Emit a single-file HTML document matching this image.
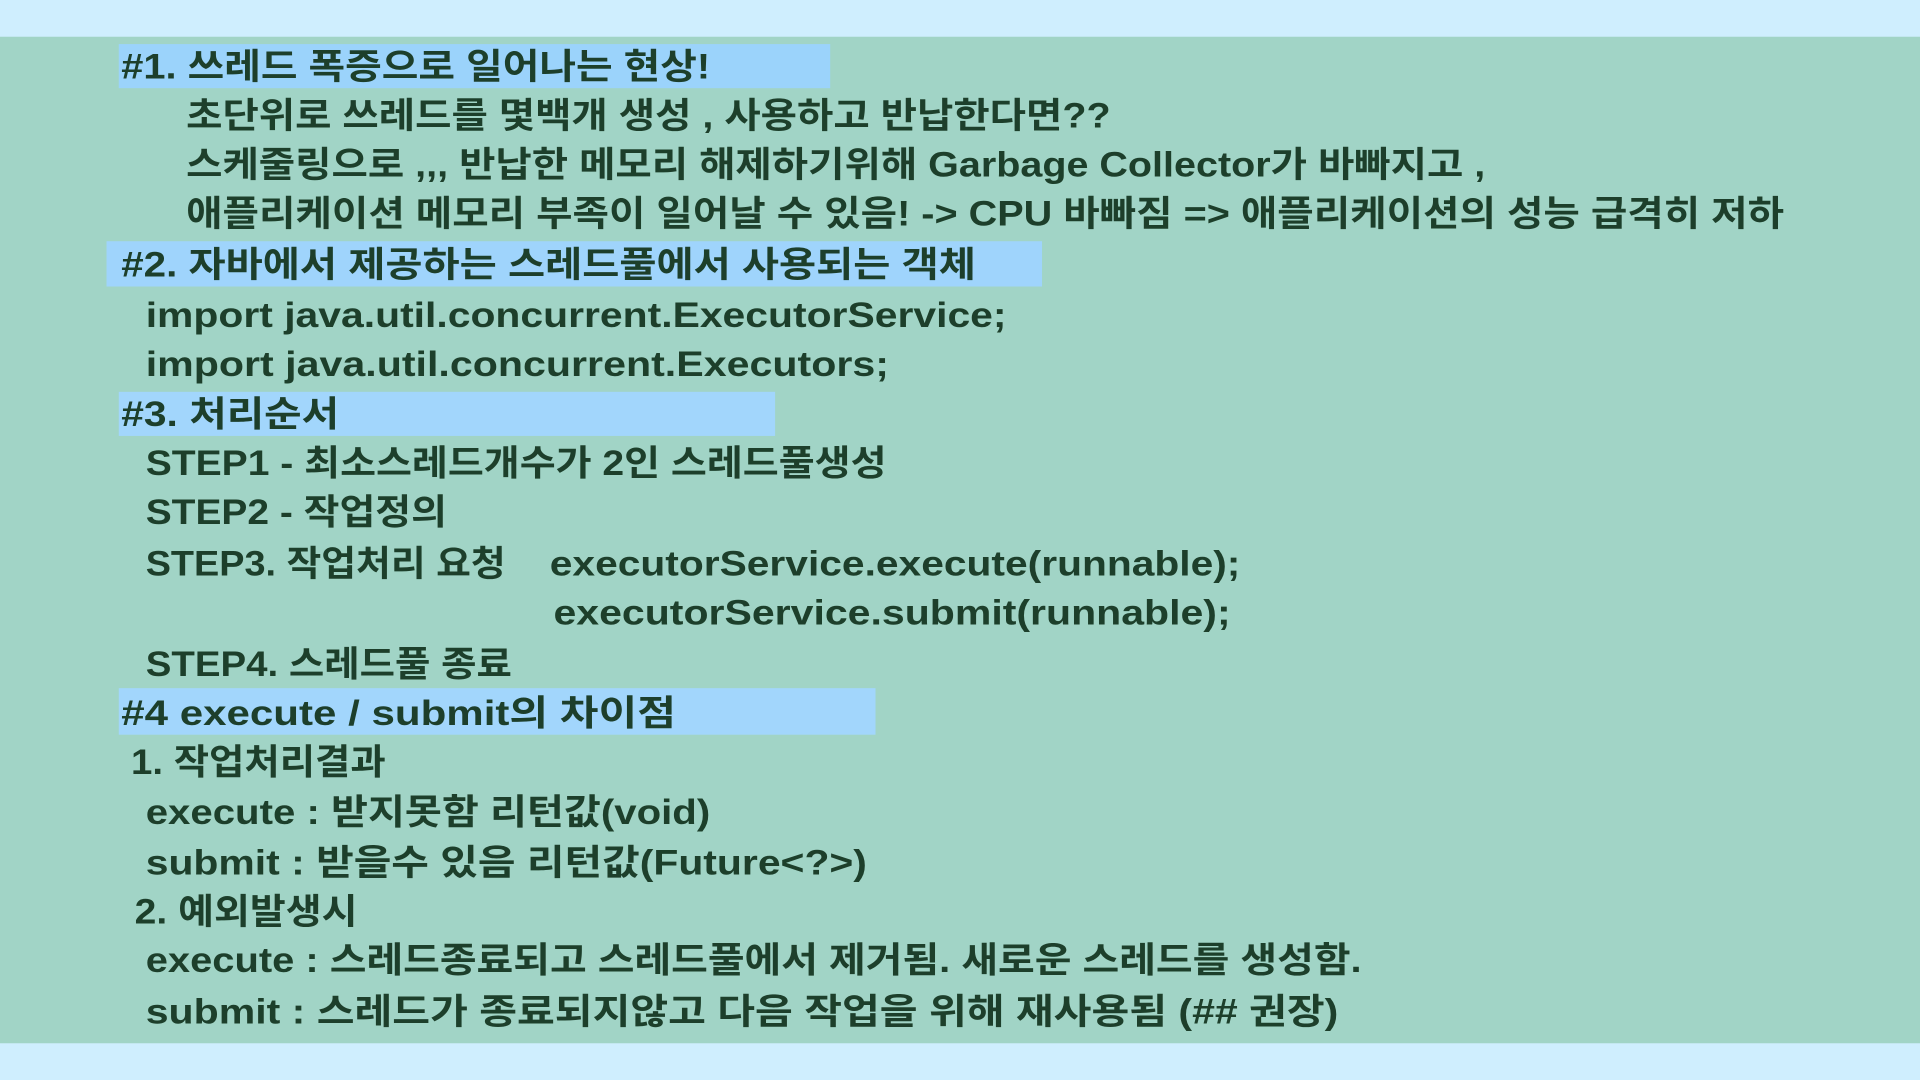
<!DOCTYPE html>
<html><head><meta charset="utf-8">
<style>
html,body{margin:0;padding:0;width:1920px;height:1080px;overflow:hidden;background:#cfeefe;}
svg{display:block}
text{font-family:"Liberation Sans","Noto Sans CJK KR","NanumGothic",sans-serif;font-size:29px;font-weight:700;fill:#1d3f2b;}
</style></head><body>
<svg width="1920" height="1080" viewBox="0 0 1568 882" preserveAspectRatio="none" xmlns="http://www.w3.org/2000/svg">
<rect x="0" y="0" width="1568" height="882" fill="#cfeefe"/>
<rect x="0" y="30" width="1568" height="822" fill="#a1d4c6"/>
<rect x="97" y="36" width="581" height="36" fill="#9bd3fb"/>
<rect x="87" y="197" width="764" height="37" fill="#9fd4fc"/>
<rect x="97" y="320" width="536" height="36" fill="#a2d6fc"/>
<rect x="97" y="562" width="618" height="38" fill="#a2d6fc"/>
<g>
<text x="99" y="64" textLength="481" lengthAdjust="spacingAndGlyphs">#1. 쓰레드 폭증으로 일어나는 현상!</text>
<text x="152" y="104" textLength="755" lengthAdjust="spacingAndGlyphs">초단위로 쓰레드를 몇백개 생성 , 사용하고 반납한다면??</text>
<text x="152" y="144" textLength="1061" lengthAdjust="spacingAndGlyphs">스케줄링으로 ,,, 반납한 메모리 해제하기위해 Garbage Collector가 바빠지고 ,</text>
<text x="152" y="184" textLength="1305" lengthAdjust="spacingAndGlyphs">애플리케이션 메모리 부족이 일어날 수 있음! -&gt; CPU 바빠짐  =&gt; 애플리케이션의 성능 급격히 저하</text>
<text x="99" y="226" textLength="698" lengthAdjust="spacingAndGlyphs">#2. 자바에서 제공하는 스레드풀에서 사용되는 객체</text>
<text x="119" y="267" textLength="703" lengthAdjust="spacingAndGlyphs">import java.util.concurrent.ExecutorService;</text>
<text x="119" y="307" textLength="607" lengthAdjust="spacingAndGlyphs">import java.util.concurrent.Executors;</text>
<text x="99" y="348" textLength="178" lengthAdjust="spacingAndGlyphs">#3. 처리순서</text>
<text x="119" y="388" textLength="605" lengthAdjust="spacingAndGlyphs">STEP1 - 최소스레드개수가 2인 스레드풀생성</text>
<text x="119" y="428" textLength="246" lengthAdjust="spacingAndGlyphs">STEP2 - 작업정의</text>
<text x="119" y="470" textLength="294" lengthAdjust="spacingAndGlyphs">STEP3. 작업처리 요청</text>
<text x="449" y="470" textLength="564" lengthAdjust="spacingAndGlyphs">executorService.execute(runnable);</text>
<text x="452" y="510" textLength="553" lengthAdjust="spacingAndGlyphs">executorService.submit(runnable);</text>
<text x="119" y="552" textLength="299" lengthAdjust="spacingAndGlyphs">STEP4. 스레드풀 종료</text>
<text x="99" y="592" textLength="453" lengthAdjust="spacingAndGlyphs">#4 execute / submit의 차이점</text>
<text x="107" y="632" textLength="208" lengthAdjust="spacingAndGlyphs">1. 작업처리결과</text>
<text x="119" y="673" textLength="461" lengthAdjust="spacingAndGlyphs">execute : 받지못함 리턴값(void)</text>
<text x="119" y="714" textLength="589" lengthAdjust="spacingAndGlyphs">submit : 받을수 있음 리턴값(Future&lt;?&gt;)</text>
<text x="110" y="754" textLength="182" lengthAdjust="spacingAndGlyphs">2. 예외발생시</text>
<text x="119" y="794" textLength="993" lengthAdjust="spacingAndGlyphs">execute : 스레드종료되고 스레드풀에서 제거됨. 새로운 스레드를 생성함.</text>
<text x="119" y="836" textLength="974" lengthAdjust="spacingAndGlyphs">submit : 스레드가 종료되지않고 다음 작업을 위해 재사용됨 (## 권장)</text>
</g>
</svg>
</body></html>
